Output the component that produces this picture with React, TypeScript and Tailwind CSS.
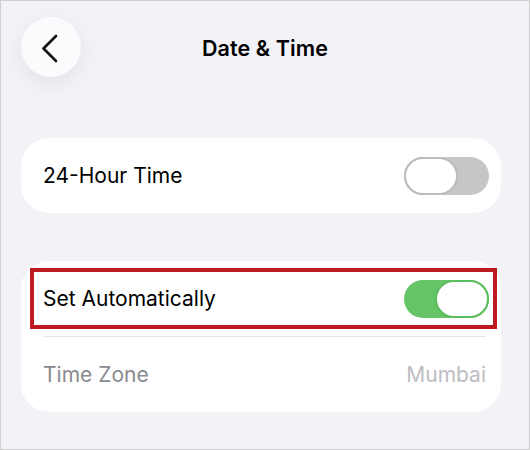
import React from 'react';

const Toggle: React.FC<{ on: boolean }> = ({ on }) => (
  <div
    className={`flex h-[38px] w-[85px] shrink-0 rounded-full ${
      on ? 'justify-end bg-[#65c466]' : 'justify-start bg-[#c6c6c8]'
    }`}
  >
    <div
      className={`h-full w-[54px] rounded-full border-2 bg-white ${
        on ? 'border-[#5cbd5e]' : 'border-[#bcbcbe]'
      }`}
    />
  </div>
);

const App: React.FC = () => {
  return (
    <div
      className="flex h-[450px] w-[530px] flex-col overflow-hidden border border-[#cfcfd2] bg-[#f2f2f7] pl-[20px] pr-[20px]"
      style={{ fontFamily: 'Inter, "Noto Sans", sans-serif' }}
    >
      {/* Header */}
      <div className="mt-[16px] grid grid-cols-[60px_1fr_60px] items-center">
        <button className="flex h-[60px] w-[60px] items-center justify-center rounded-full bg-[#fbfbfd] shadow-[0_6px_22px_rgba(0,0,0,0.07)]">
          <svg width="60" height="60" viewBox="0 0 60 60" fill="none">
            <path d="M35 19 L22.5 31.5 L35 44" stroke="#111" strokeWidth="2.7" strokeLinecap="round" strokeLinejoin="round" />
          </svg>
        </button>
        <h1 className="pt-[3px] text-center text-[21.5px] font-semibold tracking-[0.1px] text-black">Date &amp; Time</h1>
        <div />
      </div>

      {/* 24-hour */}
      <div className="mr-[8px] mt-[61px] flex h-[75px] items-center justify-between rounded-[28px] bg-white pl-[22px] pr-[12px]">
        <span className="text-[21px] text-black">24-Hour Time</span>
        <Toggle on={false} />
      </div>

      {/* Automatic */}
      <div className="relative mr-[8px] mt-[48px] flex flex-col rounded-[28px] bg-white pl-[22px]">
        <div className="flex h-[75px] items-center justify-between pr-[12px]">
          <span className="text-[21px] text-black">Set Automatically</span>
          <Toggle on />
        </div>
        <div className="mr-[15px] h-px bg-[#e5e5ea]" />
        <div className="flex h-[75px] items-center justify-between pr-[15px]">
          <span className="text-[21px] text-[#8a8a8e]">Time Zone</span>
          <span className="text-[21px] text-[#bdbdc1]">Mumbai</span>
        </div>
        <div className="absolute left-[9px] right-[4px] top-[7px] h-[61px] border-[4px] border-[#be1a22]" />
      </div>
    </div>
  );
};

export default App;
